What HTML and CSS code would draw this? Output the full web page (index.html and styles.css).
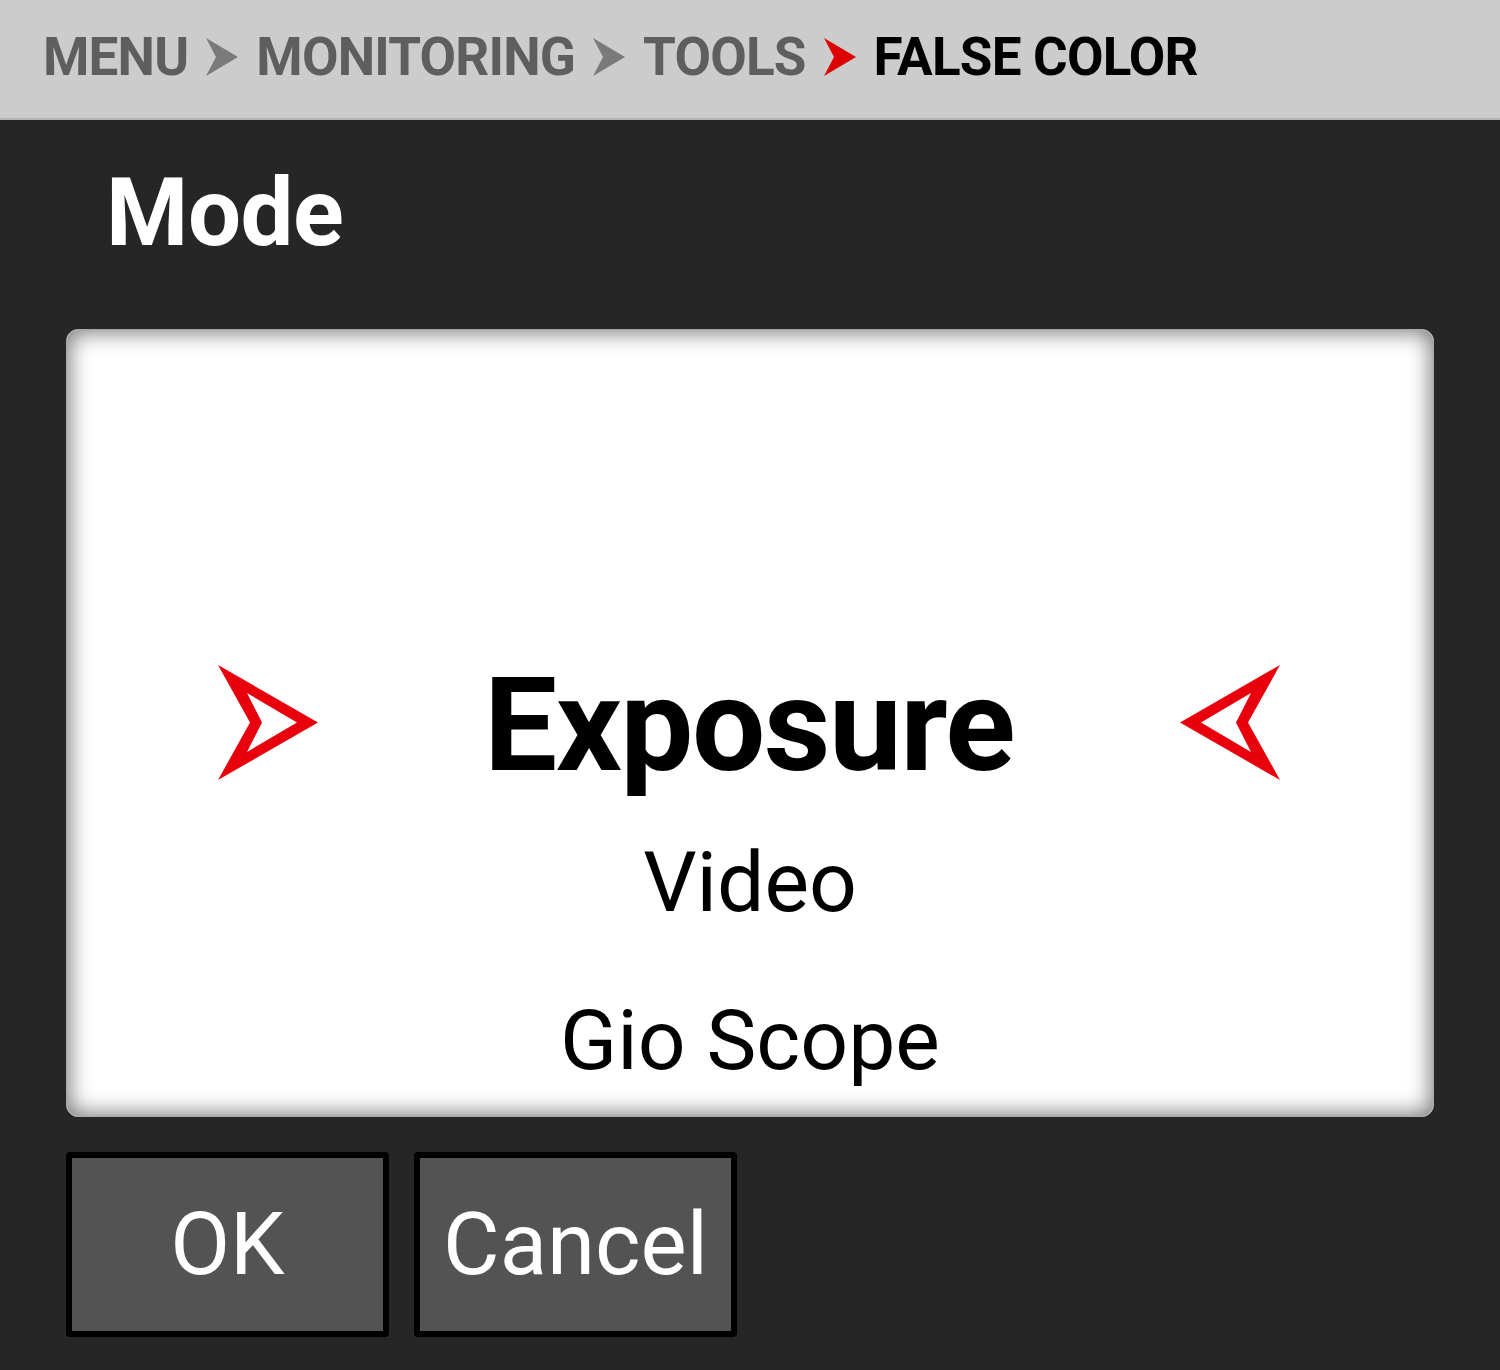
FILE: index.html
```html
<!DOCTYPE html>
<html lang="en">
<head>
<meta charset="utf-8">
<title>False Color Mode</title>
<link rel="stylesheet" href="styles.css">
</head>
<body>
<header class="crumbs">
  <span class="crumb">MENU</span>
  <svg class="sep" viewBox="0 0 32 38" aria-hidden="true"><polygon points="0,0 32,19 0,38 10,19"/></svg>
  <span class="crumb">MONITORING</span>
  <svg class="sep" viewBox="0 0 32 38" aria-hidden="true"><polygon points="0,0 32,19 0,38 10,19"/></svg>
  <span class="crumb">TOOLS</span>
  <svg class="sep sep-active" viewBox="0 0 32 38" aria-hidden="true"><polygon points="0,0 32,19 0,38 10,19"/></svg>
  <span class="crumb crumb-current">FALSE COLOR</span>
</header>
<main class="screen">
  <h1 class="title">Mode</h1>
  <section class="picker">
    <div class="picker-row picker-selected">
      <svg class="marker" viewBox="0 0 100 115" aria-hidden="true"><path fill-rule="evenodd" d="M0 0 L100 57.5 L0 115 L32 57.5 Z M29 28 L44 57.5 L29 87 L79 57.5 Z"/></svg>
      <span class="option-main">Exposure</span>
      <svg class="marker marker-flip" viewBox="0 0 100 115" aria-hidden="true"><path fill-rule="evenodd" d="M0 0 L100 57.5 L0 115 L32 57.5 Z M29 28 L44 57.5 L29 87 L79 57.5 Z"/></svg>
    </div>
    <div class="option option-second">Video</div>
    <div class="option option-third">Gio Scope</div>
  </section>
  <div class="buttons">
    <button class="btn">OK</button>
    <button class="btn">Cancel</button>
  </div>
</main>
</body>
</html>
```
FILE: styles.css
```css
html, body {
  margin: 0;
  padding: 0;
}
body {
  background: #262626;
  font-family: Roboto, "Liberation Sans", sans-serif;
  width: 1500px;
  height: 1370px;
  overflow: hidden;
}
.crumbs {
  box-sizing: content-box;
  height: 114px;
  padding: 0 0 4px 43px;
  background: #cccccc;
  border-bottom: 2px solid #b4b4b4;
  display: flex;
  align-items: center;
  font-weight: 700;
  font-size: 53px;
  line-height: 60px;
  letter-spacing: -0.8px;
  color: #5e5e5e;
}
.crumb {
  white-space: nowrap;
}
.crumb-current {
  color: #000;
}
.sep {
  width: 32px;
  height: 38px;
  margin: 0 18px 0 18px;
  fill: #7a7a7a;
  flex: none;
}
.sep-active {
  fill: #dd0000;
}
.screen {
  padding: 0 66px;
}
.title {
  margin: 38px 0 61px 40px;
  font-weight: 700;
  font-size: 94px;
  line-height: 110px;
  letter-spacing: -0.4px;
  color: #fff;
}
.picker {
  box-sizing: border-box;
  height: 788px;
  background: #fff;
  border: 1px solid #a8a8a8;
  border-radius: 12px;
  overflow: hidden;
  box-shadow: inset 0 0 22px 2px rgba(0,0,0,0.55);
  display: flex;
  flex-direction: column;
  align-items: center;
}
.picker-row {
  align-self: stretch;
  margin-top: 331px;
  height: 130px;
  padding: 0 153px 0 151px;
  display: flex;
  align-items: center;
  justify-content: space-between;
}
.marker {
  width: 100px;
  height: 115px;
  fill: #e8000c;
  margin-bottom: 7px;
  flex: none;
}
.marker-flip {
  transform: scaleX(-1);
}
.option-main {
  font-weight: 700;
  font-size: 130px;
  line-height: 130px;
  letter-spacing: -1.5px;
  color: #000;
}
.option {
  font-weight: 400;
  font-size: 84px;
  line-height: 100px;
  color: #000;
}
.option-second {
  margin-top: 42px;
}
.option-third {
  margin-top: 58px;
}
.buttons {
  margin-top: 35px;
  display: flex;
  gap: 25px;
}
.btn {
  width: 323px;
  height: 185px;
  box-sizing: border-box;
  border: 6px solid #000;
  border-radius: 4px;
  background: #535353;
  color: #fff;
  font-family: Roboto, "Liberation Sans", sans-serif;
  font-weight: 400;
  font-size: 87px;
  line-height: 1;
  padding: 0;
  display: flex;
  align-items: center;
  justify-content: center;
}
```
